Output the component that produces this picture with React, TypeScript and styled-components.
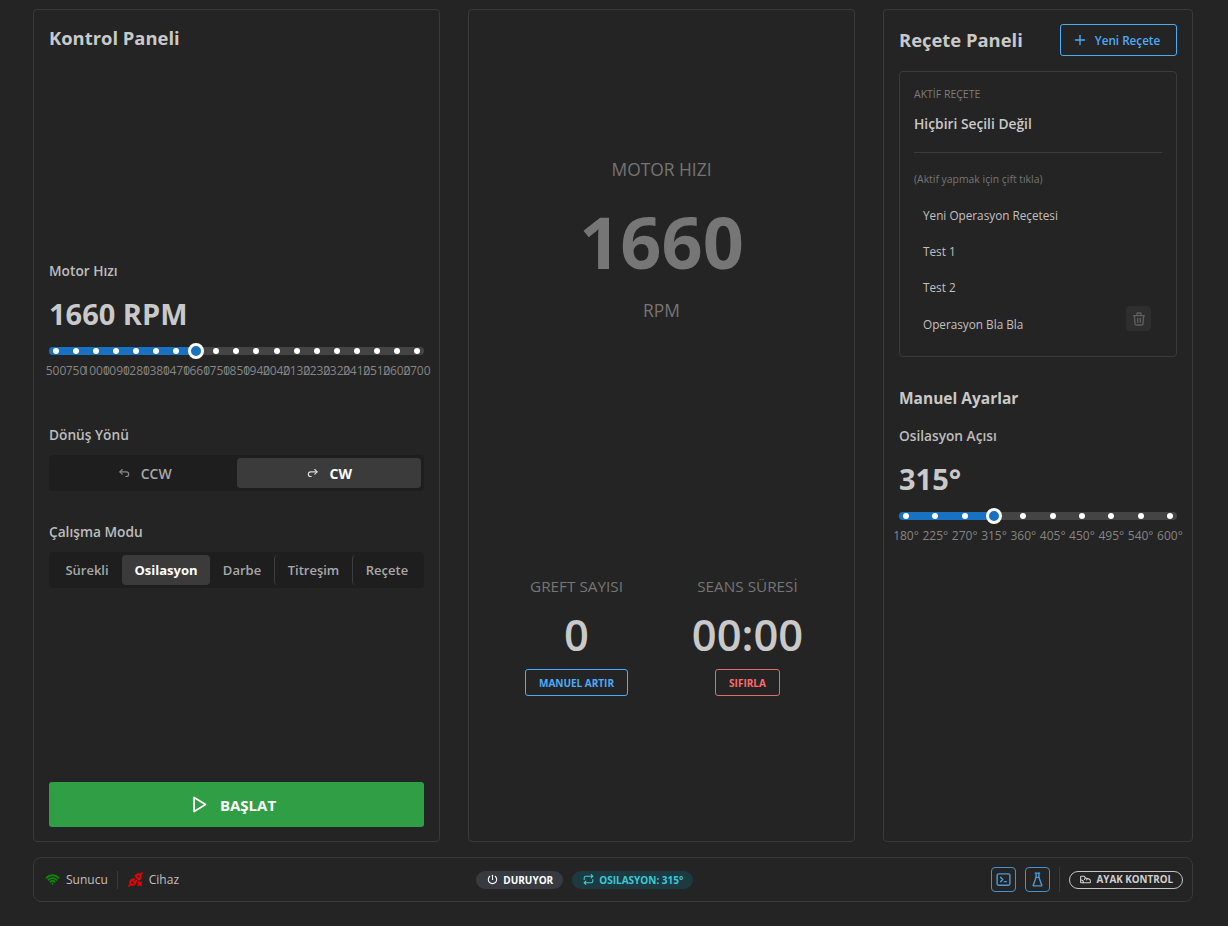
import styled, { createGlobalStyle } from 'styled-components';
import {
  TbArrowBackUp,
  TbArrowForwardUp,
  TbFlask,
  TbPlayerPlay,
  TbPlugConnectedX,
  TbPlus,
  TbPower,
  TbRepeat,
  TbShoe,
  TbTerminal2,
  TbTrash,
  TbWifi,
} from 'react-icons/tb';

const GlobalStyle = createGlobalStyle`
  html, body {
    margin: 0;
    padding: 0;
    background: #242424;
  }
  * {
    box-sizing: border-box;
  }
  body {
    font-family: "Open Sans", "Noto Sans", "Liberation Sans", sans-serif;
    color: #c9c9c9;
  }
`;

const Page = styled.div`
  width: 1228px;
  height: 926px;
  padding: 9px 35px 24px 33px;
  display: flex;
  flex-direction: column;
  gap: 15px;
`;

const Columns = styled.div`
  display: grid;
  grid-template-columns: 407px 387px 310px;
  gap: 28px;
  height: 833px;
`;

const Panel = styled.section`
  background: #242424;
  border: 1px solid #3a3a3a;
  border-radius: 4px;
  padding: 14px 15px;
  display: flex;
  flex-direction: column;
`;

const PanelTitle = styled.h2`
  margin: 0;
  font-size: 18.4px;
  line-height: 28px;
  font-weight: 700;
  color: #c9c9c9;
`;

const FieldLabel = styled.div<{ $top?: number }>`
  margin-top: ${(p) => p.$top ?? 0}px;
  font-size: 13.7px;
  line-height: 20px;
  font-weight: 600;
  color: #bdbdbd;
`;

const BigValue = styled.div`
  margin-top: 14px;
  font-size: 29px;
  line-height: 38px;
  font-weight: 700;
  color: #c9c9c9;
`;

const SliderBox = styled.div`
  position: relative;
  margin-top: 14px;
`;

const Track = styled.div`
  position: relative;
  height: 8px;
  border-radius: 4px;
  background: #444444;
  padding: 0 4px;
  display: flex;
  align-items: center;
  justify-content: space-between;
`;

const Fill = styled.div`
  position: absolute;
  left: 0;
  top: 0;
  bottom: 0;
  border-radius: 4px;
  background: #1971c2;
`;

const Dot = styled.span`
  position: relative;
  width: 6px;
  height: 6px;
  border-radius: 50%;
  background: #ffffff;
`;

const Thumb = styled.div`
  position: absolute;
  top: -4px;
  width: 16px;
  height: 16px;
  margin-left: -8px;
  border-radius: 50%;
  border: 3px solid #ffffff;
  background: #1971c2;
`;

const Marks = styled.div`
  margin-top: 7px;
  padding: 0 7px;
  display: flex;
  justify-content: space-between;
`;

const Mark = styled.span`
  width: 0;
  display: flex;
  justify-content: center;
  font-size: 12px;
  line-height: 18px;
  color: #858585;
`;

const Segmented = styled.div`
  margin-top: 10px;
  height: 36px;
  padding: 3px;
  border-radius: 4px;
  background: #1e1e1e;
  display: flex;
  align-items: stretch;
`;

const Segment = styled.div<{ $active?: boolean; $divider?: boolean; $grow?: boolean; $width?: number }>`
  position: relative;
  flex: ${(p) => (p.$grow ? '1 1 0' : `0 0 ${p.$width}px`)};
  display: flex;
  align-items: center;
  justify-content: center;
  gap: 10px;
  border-radius: 4px;
  font-size: ${(p) => (p.$grow ? 14 : 13)}px;
  font-weight: ${(p) => (p.$active ? 700 : 600)};
  color: ${(p) => (p.$active ? '#ffffff' : '#a8a8a8')};
  background: ${(p) => (p.$active ? '#3b3b3b' : 'transparent')};
  border-left: ${(p) => (p.$divider ? '1px solid #3e3e3e' : 'none')};

  svg {
    color: ${(p) => (p.$active ? '#d8d8d8' : '#8a8a8a')};
  }
`;

const StartButton = styled.button`
  margin-top: auto;
  height: 45px;
  padding: 0 9px 0 0;
  border: none;
  border-radius: 3px;
  background: #2f9e44;
  color: #ffffff;
  font-family: inherit;
  font-size: 15px;
  font-weight: 700;
  display: flex;
  align-items: center;
  justify-content: center;
  gap: 11px;
`;

const CenterPanel = styled(Panel)`
  align-items: center;
`;

const Caption = styled.div<{ $size: number; $top?: number }>`
  margin-top: ${(p) => p.$top ?? 0}px;
  font-size: ${(p) => p.$size}px;
  line-height: 24px;
  color: #757575;
`;

const MotorSpeed = styled.div`
  margin-top: 10px;
  font-size: 72px;
  line-height: 100px;
  font-weight: 700;
  color: #767676;
`;

const StatsRow = styled.div`
  margin-top: 252px;
  padding-left: 4px;
  display: grid;
  grid-template-columns: 104px 110px;
  column-gap: 64px;
`;

const Stat = styled.div`
  display: flex;
  flex-direction: column;
  align-items: center;
  white-space: nowrap;
`;

const StatValue = styled.div`
  margin-top: 8px;
  font-size: 43.5px;
  line-height: 58px;
  font-weight: 600;
  color: #c9c9c9;
`;

const OutlineButton = styled.button<{ $color: string; $border: string }>`
  margin-top: 5px;
  height: 27px;
  padding: 0 13px;
  border: 1px solid ${(p) => p.$border};
  border-radius: 3px;
  background: transparent;
  color: ${(p) => p.$color};
  font-family: inherit;
  font-size: 10px;
  font-weight: 700;
  white-space: nowrap;
`;

const RecipeHeader = styled.div`
  display: flex;
  align-items: center;
  justify-content: space-between;
  height: 31px;
`;

const NewButton = styled.button`
  width: 117px;
  height: 32px;
  padding: 0 5px 0 0;
  border: 1px solid #4dabf7;
  border-radius: 3px;
  background: transparent;
  color: #4dabf7;
  font-family: inherit;
  font-size: 11.7px;
  font-weight: 600;
  display: flex;
  align-items: center;
  justify-content: center;
  gap: 7px;
`;

const RecipeBox = styled.div`
  margin-top: 16px;
  height: 286px;
  padding: 14px;
  border: 1px solid #3a3a3a;
  border-radius: 4px;
  display: flex;
  flex-direction: column;
`;

const ActiveLabel = styled.div`
  font-size: 10.5px;
  line-height: 16px;
  color: #7d7d7d;
`;

const ActiveName = styled.div`
  margin-top: 12px;
  font-size: 13.8px;
  line-height: 20px;
  font-weight: 600;
  color: #c9c9c9;
`;

const Rule = styled.hr`
  width: 100%;
  margin: 18px 0 0;
  border: none;
  border-top: 1px solid #3a3a3a;
`;

const Hint = styled.div`
  margin-top: 18px;
  font-size: 10.4px;
  line-height: 16px;
  color: #757575;
`;

const RecipeList = styled.div`
  margin-top: 10px;
  display: flex;
  flex-direction: column;
`;

const RecipeItem = styled.div`
  height: 36px;
  padding: 0 11px 0 9px;
  display: flex;
  align-items: center;
  justify-content: space-between;
  font-size: 11.75px;
  color: #c0c0c0;

  &:last-child {
    height: 38px;
  }
`;

const TrashButton = styled.div`
  width: 25px;
  height: 25px;
  margin-bottom: 11px;
  border-radius: 4px;
  background: #2e2e2e;
  color: #5f5f5f;
  display: flex;
  align-items: center;
  justify-content: center;
`;

const SectionTitle = styled.h3`
  margin: 30px 0 0;
  font-size: 15.5px;
  line-height: 22px;
  font-weight: 700;
  color: #c9c9c9;
`;

const Footer = styled.footer`
  height: 45px;
  padding: 0 9px 0 10px;
  background: #242424;
  border: 1px solid #3a3a3a;
  border-radius: 8px;
  display: flex;
  align-items: center;
  justify-content: space-between;
`;

const FooterLeft = styled.div`
  display: flex;
  align-items: center;
  font-size: 12px;
  color: #c0c0c0;
`;

const Connection = styled.div<{ $color: string }>`
  display: flex;
  align-items: center;
  gap: 5px;

  svg {
    color: ${(p) => p.$color};
  }
`;

const VDivider = styled.span<{ $height: number; $space: number }>`
  width: 1px;
  height: ${(p) => p.$height}px;
  margin: 0 ${(p) => p.$space}px;
  background: #3a3a3a;
`;

const FooterCenter = styled.div`
  display: flex;
  align-items: center;
  gap: 9px;
`;

const Pill = styled.div<{ $bg: string; $color: string }>`
  height: 18px;
  padding: 0 10px;
  border-radius: 9px;
  background: ${(p) => p.$bg};
  color: ${(p) => p.$color};
  display: flex;
  align-items: center;
  gap: 4px;
  font-size: 10px;
  font-weight: 700;
  white-space: nowrap;
`;

const FooterRight = styled.div`
  display: flex;
  align-items: center;
  gap: 9px;
`;

const IconButton = styled.div`
  width: 25px;
  height: 25px;
  border: 1px solid #4a90c8;
  border-radius: 4px;
  color: #4a9ad8;
  display: flex;
  align-items: center;
  justify-content: center;
`;

const FootDivider = styled.span`
  width: 1px;
  height: 25px;
  background: #3a3a3a;
`;

const FootButton = styled.div`
  height: 18px;
  padding: 0 9px;
  border: 1px solid #c4c4c4;
  border-radius: 9px;
  color: #d0d0d0;
  display: flex;
  align-items: center;
  gap: 5px;
  font-size: 9.8px;
  font-weight: 700;
  white-space: nowrap;
`;

const speedMarks = [
  500, 750, 1000, 1090, 1280, 1380, 1470, 1660, 1750, 1850, 1940, 2040, 2130, 2230, 2320, 2410,
  2510, 2600, 2700,
];
const angleMarks = [180, 225, 270, 315, 360, 405, 450, 495, 540, 600];
const recipes = ['Yeni Operasyon Reçetesi', 'Test 1', 'Test 2', 'Operasyon Bla Bla'];

function Slider({ marks, index, suffix = '' }: { marks: number[]; index: number; suffix?: string }) {
  const percent = (index / (marks.length - 1)) * 100;
  const thumbLeft = `calc(7px + (100% - 14px) * ${percent / 100})`;
  return (
    <SliderBox>
      <Track>
        <Fill style={{ width: thumbLeft }} />
        {marks.map((mark) => (
          <Dot key={mark} />
        ))}
        <Thumb style={{ left: thumbLeft }} />
      </Track>
      <Marks>
        {marks.map((mark) => (
          <Mark key={mark}>
            {mark}
            {suffix}
          </Mark>
        ))}
      </Marks>
    </SliderBox>
  );
}

function App() {
  return (
    <Page>
      <GlobalStyle />
      <Columns>
        <Panel>
          <PanelTitle>Kontrol Paneli</PanelTitle>
          <FieldLabel $top={209}>Motor Hızı</FieldLabel>
          <BigValue>1660 RPM</BigValue>
          <Slider marks={speedMarks} index={7} />
          <FieldLabel $top={45}>Dönüş Yönü</FieldLabel>
          <Segmented>
            <Segment $grow>
              <TbArrowBackUp size={14} />
              CCW
            </Segment>
            <Segment $grow $active>
              <TbArrowForwardUp size={14} />
              CW
            </Segment>
          </Segmented>
          <FieldLabel $top={31}>Çalışma Modu</FieldLabel>
          <Segmented>
            <Segment $width={70}>Sürekli</Segment>
            <Segment $width={88} $active>
              Osilasyon
            </Segment>
            <Segment $width={64}>Darbe</Segment>
            <Segment $width={78} $divider>
              Titreşim
            </Segment>
            <Segment $width={69} $divider>
              Reçete
            </Segment>
          </Segmented>
          <StartButton>
            <TbPlayerPlay size={21} />
            BAŞLAT
          </StartButton>
        </Panel>

        <CenterPanel>
          <Caption $size={17.4} $top={133}>
            MOTOR HIZI
          </Caption>
          <MotorSpeed>1660</MotorSpeed>
          <Caption $size={17.4} $top={7}>
            RPM
          </Caption>
          <StatsRow>
            <Stat>
              <Caption $size={15.3}>GREFT SAYISI</Caption>
              <StatValue>0</StatValue>
              <OutlineButton $color="#4dabf7" $border="#4dabf7">
                MANUEL ARTIR
              </OutlineButton>
            </Stat>
            <Stat>
              <Caption $size={15.3}>SEANS SÜRESİ</Caption>
              <StatValue>00:00</StatValue>
              <OutlineButton $color="#ff6b6b" $border="#e06c6c">
                SIFIRLA
              </OutlineButton>
            </Stat>
          </StatsRow>
        </CenterPanel>

        <Panel>
          <RecipeHeader>
            <PanelTitle>Reçete Paneli</PanelTitle>
            <NewButton>
              <TbPlus size={16} />
              Yeni Reçete
            </NewButton>
          </RecipeHeader>
          <RecipeBox>
            <ActiveLabel>AKTİF REÇETE</ActiveLabel>
            <ActiveName>Hiçbiri Seçili Değil</ActiveName>
            <Rule />
            <Hint>(Aktif yapmak için çift tıkla)</Hint>
            <RecipeList>
              {recipes.map((recipe, i) => (
                <RecipeItem key={recipe}>
                  {recipe}
                  {i === recipes.length - 1 && (
                    <TrashButton>
                      <TbTrash size={16} />
                    </TrashButton>
                  )}
                </RecipeItem>
              ))}
            </RecipeList>
          </RecipeBox>
          <SectionTitle>Manuel Ayarlar</SectionTitle>
          <FieldLabel $top={17}>Osilasyon Açısı</FieldLabel>
          <BigValue>315°</BigValue>
          <Slider marks={angleMarks} index={3} suffix="°" />
        </Panel>
      </Columns>

      <Footer>
        <FooterLeft>
          <Connection $color="#0d860d">
            <TbWifi size={17} strokeWidth={2.6} />
            Sunucu
          </Connection>
          <VDivider $height={18} $space={9} />
          <Connection $color="#ee0000">
            <TbPlugConnectedX size={17} strokeWidth={2.6} />
            Cihaz
          </Connection>
        </FooterLeft>
        <FooterCenter>
          <Pill $bg="#373a40" $color="#ffffff">
            <TbPower size={13} />
            DURUYOR
          </Pill>
          <Pill $bg="#1d3a40" $color="#3bc9db">
            <TbRepeat size={13} />
            OSILASYON: 315°
          </Pill>
        </FooterCenter>
        <FooterRight>
          <IconButton>
            <TbTerminal2 size={17} />
          </IconButton>
          <IconButton>
            <TbFlask size={17} />
          </IconButton>
          <FootDivider />
          <FootButton>
            <TbShoe size={13} />
            AYAK KONTROL
          </FootButton>
        </FooterRight>
      </Footer>
    </Page>
  );
}

export default App;
